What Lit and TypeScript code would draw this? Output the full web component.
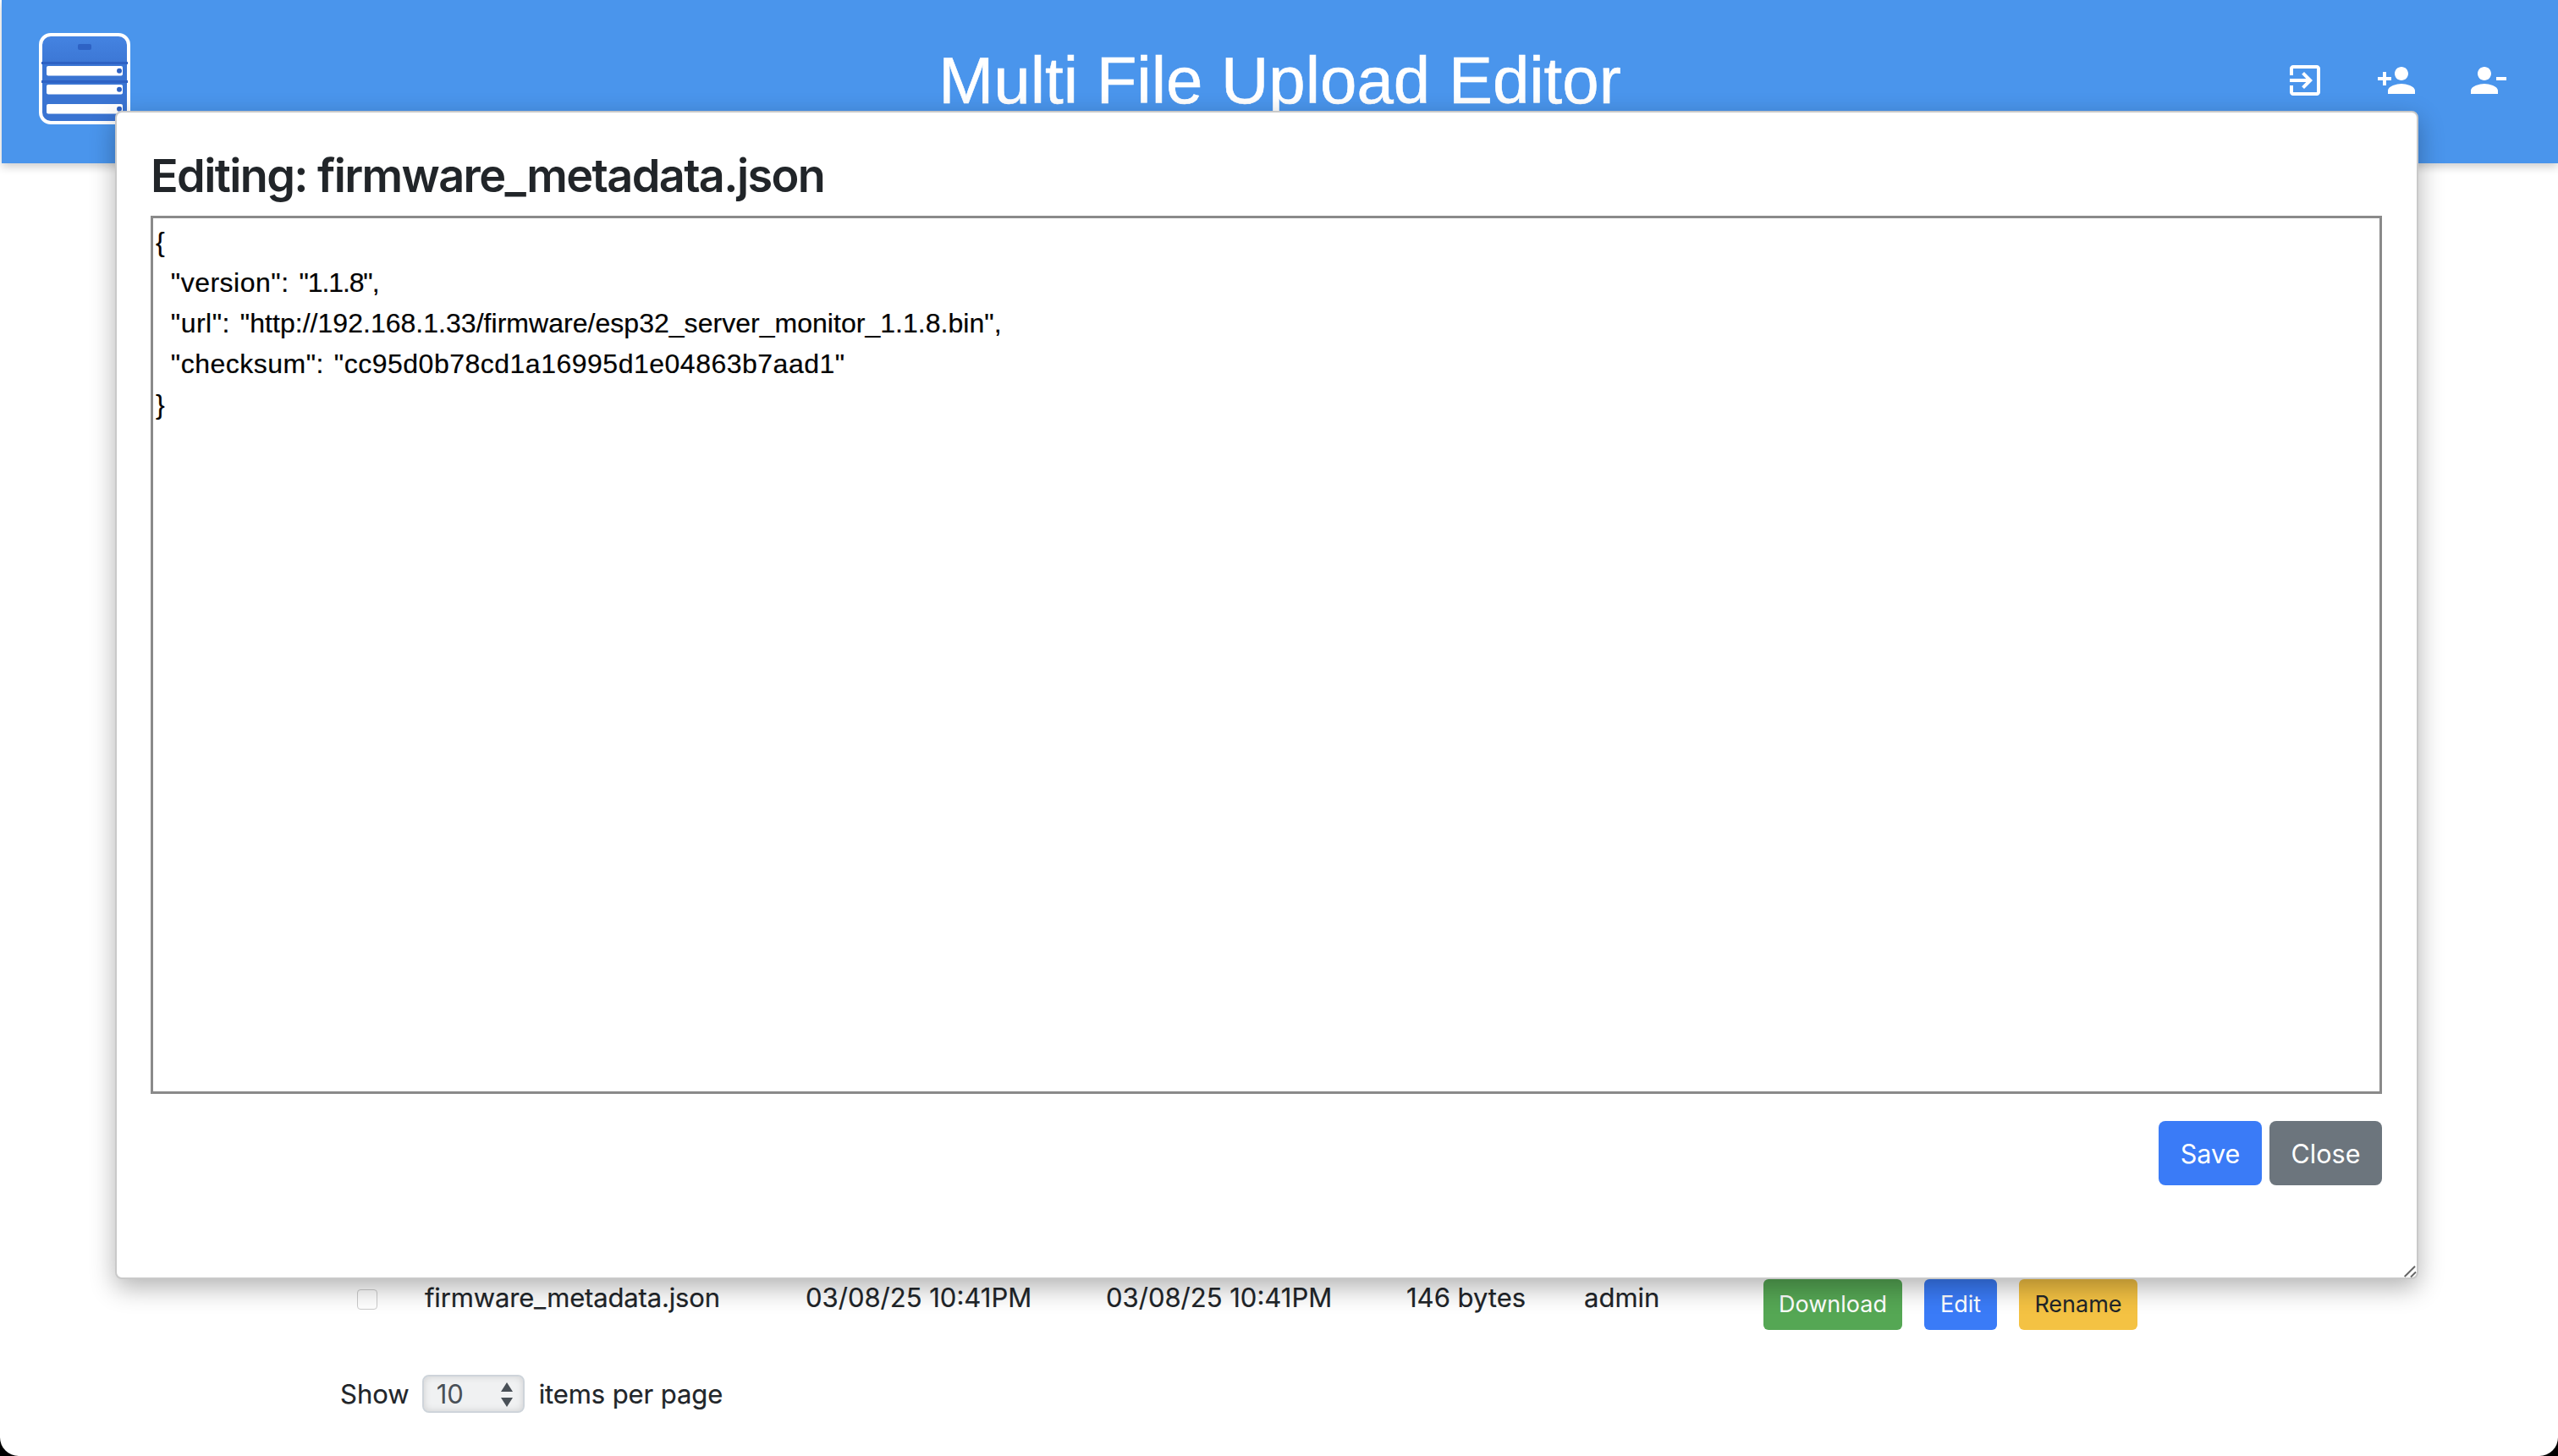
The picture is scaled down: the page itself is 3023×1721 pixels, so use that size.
import { LitElement, html, css, svg } from "lit";
import { customElement } from "lit/decorators.js";

const EXIT = "M10.09 15.59L11.5 17l5-5-5-5-1.41 1.41L12.67 11H3v2h9.67l-2.58 2.59zM19 3H5c-1.11 0-2 .9-2 2v4h2V5h14v14H5v-4H3v4c0 1.1.89 2 2 2h14c1.1 0 2-.9 2-2V5c0-1.1-.9-2-2-2z";
const ADD = "M15 12c2.21 0 4-1.79 4-4s-1.79-4-4-4-4 1.79-4 4 1.79 4 4 4zm-9-2V7H4v3H1v2h3v3h2v-3h3v-2H6zm9 4c-2.67 0-8 1.34-8 4v2h16v-2c0-2.66-5.33-4-8-4z";
const REMOVE = "M14 8c0-2.21-1.79-4-4-4S6 5.79 6 8s1.79 4 4 4 4-1.79 4-4zm3 2v2h6v-2h-6zM2 18v2h16v-2c0-2.66-5.33-4-8-4s-8 1.34-8 4z";

@customElement("app-root")
export class AppRoot extends LitElement {
  static styles = css`
    :host { display: block; position: relative; width: 3023px; height: 1721px; overflow: hidden; background: #fff;
      font-family: "Inter", "Liberation Sans", sans-serif; color: #212529; }
    .header { height: 193px; margin-left: 2px; background: #4a95ec; display: flex; align-items: flex-start; justify-content: space-between;
      padding: 39px 59px 0 44px; box-sizing: border-box; box-shadow: 0 4px 10px rgba(0,0,0,.2); position: relative; }
    .logo { width: 108px; height: 108px; display: block; flex: none; }
    .title { position: absolute; left: 0; right: 0; top: 49px; margin: 0; text-align: center; color: #fff; font: 400 78px/1.2 "Liberation Sans", sans-serif; -webkit-text-stroke: 0.6px #fff; }
    .icons { display: flex; gap: 60px; margin-top: 32px; position: relative; }
    .icons svg { width: 48px; height: 48px; fill: #fff; display: block; }
    .content { padding: 0 0 0 402px; }
    .row { display: grid; grid-template-columns: 101px 449px 355px 355px 210px 212px auto; align-items: start; margin-top: 1317px; font-size: 31px; line-height: 46px; height: 92px; }
    .check { width: 24px; height: 24px; margin: 14px 0 0 20px; border: 1px solid #ccc; border-radius: 4px; box-sizing: border-box; background: #fff; }
    .cell { margin-top: 1px; white-space: nowrap; -webkit-text-stroke: 0.2px #212529; }
    .file { letter-spacing: -0.15px; margin-left: -1px; }
    .actions { display: flex; gap: 26px; margin-top: 2px; }
    .btn { border: 0; font: 400 27px/40px "Inter", sans-serif; height: 60px; padding: 0; border-radius: 6px; box-sizing: border-box; color: #fff; display: flex; align-items: center; justify-content: center; }
    .green { background: #55a754; width: 164px; }
    .blue { background: #3a7bf7; width: 86px; }
    .yellow { background: #f4c243; color: #212529; width: 140px; }
    .pager { display: flex; align-items: center; font-size: 31px; margin-top: 23px; height: 45px; }
    .pager span { -webkit-text-stroke: 0.2px #212529; }
    .items { letter-spacing: -0.1px; }
    .select { width: 121px; height: 45px; margin: 0 17px 0 15px; box-sizing: border-box; border: 2px solid #ced4da; border-radius: 8px; position: relative; color: #495057;
      background: #f0f1f2; box-shadow: inset 0 0 8px rgba(0,0,0,.14); padding-left: 15px; line-height: 41px; }
    .arrows { position: absolute; right: 11px; top: 7px; width: 16px; height: 30px; display: block; fill: #495057; }
    .modal { position: absolute; left: 136px; top: 131px; width: 2722px; height: 1381px; box-sizing: border-box; background: #fff; border: 2px solid #c9c9c9; border-radius: 8px;
      box-shadow: 0 10px 30px rgba(0,0,0,.3); padding: 0 41px 0 40px; display: flex; flex-direction: column; }
    .modal h2 { margin: 43px 0 0; font: 600 54px/1.2 "Inter", sans-serif; letter-spacing: -1.6px; color: #212529; height: 79px; }
    .editor { box-sizing: border-box; width: 2637px; height: 1038px; padding: 4px 3px; border: 3px solid #8a8a8a; overflow: hidden; outline: 0;
      font: 400 32px/48px "Liberation Sans", sans-serif; color: #000; background: #fff; -webkit-text-stroke: 0.2px #000; }
    .line { white-space: pre; height: 48px; }
    .pair { word-spacing: 3px; }
    .key { letter-spacing: 0.5px; }
    .tight { letter-spacing: -1.1px; }
    .url { letter-spacing: 0.03px; }
    .wide { letter-spacing: 0.5px; }
    .footer { display: flex; justify-content: flex-end; gap: 9px; margin-top: 32px; }
    .footer button { height: 76px; border: 0; border-radius: 8px; font: 400 30.5px "Inter", sans-serif; color: #fff; padding: 0; }
    .save { width: 122px; background: #3a7bf7; }
    .close { width: 133px; background: #6c757d; }
    .grip { position: absolute; right: 0; bottom: 0; width: 16px; height: 16px; display: block; stroke: #666; stroke-width: 2; fill: none; }
    .corner { position: absolute; bottom: 0; width: 22px; height: 22px; display: block; fill: #000; }
    .corner.l { left: 0; }
    .corner.r { right: 0; }
  `;

  render() {
    return html`
      <div class="header">
        <svg class="logo" viewBox="0 0 108 108">
          <defs><linearGradient id="lg" x1="0" y1="0" x2="0" y2="1"><stop offset="0" stop-color="#4584e2"/><stop offset=".4" stop-color="#3a74d2"/><stop offset="1" stop-color="#3a74d2"/></linearGradient></defs>
          <rect x="2" y="2" width="104" height="104" rx="12" fill="url(#lg)" stroke="#fff" stroke-width="4"/>
          <rect x="46" y="13" width="16" height="7" rx="2" fill="#2e62c4"/>
          <rect x="3" y="34" width="102" height="3" fill="#2e62c4"/>
          <rect x="3" y="56" width="102" height="3" fill="#2e62c4"/>
          ${[39, 61, 84].map((y) => svg`
            <rect x="9" y=${y} width="90" height="11.5" rx="2" fill="#fff"/>
            <circle cx="95" cy=${y + 5.7} r="3" fill="#2e62c4"/>`)}
        </svg>
        <h1 class="title">Multi File Upload Editor</h1>
        <div class="icons">
          <svg viewBox="0 0 24 24"><path d=${EXIT}/></svg>
          <svg viewBox="0 0 24 24"><path d=${ADD}/></svg>
          <svg viewBox="0 0 24 24"><path d=${REMOVE}/></svg>
        </div>
      </div>
      <div class="content">
        <div class="row">
          <div class="check"></div>
          <div class="cell file">firmware_metadata.json</div>
          <div class="cell">03/08/25 10:41PM</div>
          <div class="cell">03/08/25 10:41PM</div>
          <div class="cell">146 bytes</div>
          <div class="cell">admin</div>
          <div class="actions">
            <div class="btn green">Download</div>
            <div class="btn blue">Edit</div>
            <div class="btn yellow">Rename</div>
          </div>
        </div>
        <div class="pager">
          <span>Show</span>
          <div class="select">10
            <svg class="arrows" viewBox="0 0 16 30"><path d="M8 0l7 11H1zM1 18h14l-7 11z"/></svg>
          </div>
          <span class="items">items per page</span>
        </div>
      </div>
      <div class="modal">
        <h2>Editing: firmware_metadata.json</h2>
        <div class="editor" role="textbox" aria-multiline="true">
          <div class="line">{</div>
          <div class="line">  <span class="pair"><span class="key">"version":</span> <span class="tight">"1.1.8",</span></span></div>
          <div class="line">  <span class="pair"><span class="key">"url":</span> <span class="url">"http://192.168.1.33/firmware/esp32_server_monitor_1.1.8.bin",</span></span></div>
          <div class="line">  <span class="pair"><span class="key">"checksum":</span> <span class="wide">"cc95d0b78cd1a16995d1e04863b7aad1"</span></span></div>
          <div class="line">}</div>
        </div>
        <div class="footer">
          <button class="save">Save</button>
          <button class="close">Close</button>
        </div>
        <svg class="grip" viewBox="0 0 16 16"><path d="M1.7 15L14 2.7M9 15.5L15 9.5"/></svg>
      </div>
      <svg class="corner l" viewBox="0 0 22 22"><path d="M0 0A22 22 0 0 0 22 22H0z"/></svg>
      <svg class="corner r" viewBox="0 0 22 22"><path d="M22 0A22 22 0 0 1 0 22H22z"/></svg>
    `;
  }
}
